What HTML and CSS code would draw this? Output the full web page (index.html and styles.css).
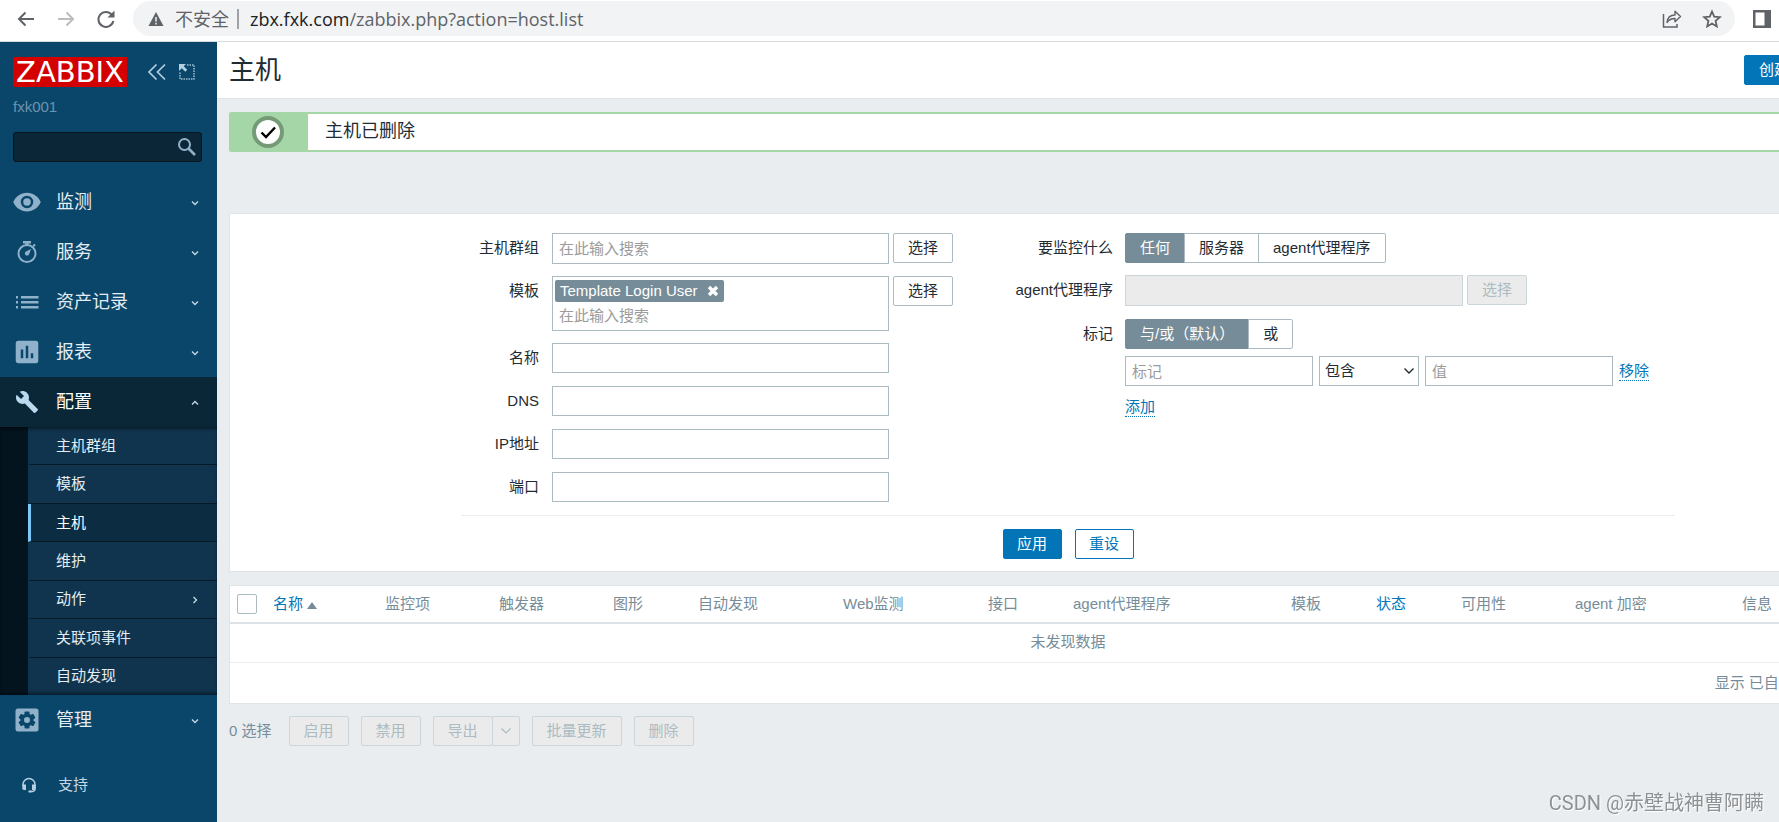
FILE: index.html
```html
<!DOCTYPE html>
<html lang="zh-CN">
<head>
<meta charset="utf-8">
<title>主机</title>
<link rel="stylesheet" href="styles.css">
</head>
<body>
<div class="browser">
  <button class="nav-btn" aria-label="后退"><svg width="20" height="20" viewBox="0 0 20 20"><path d="M18 10H3M9.500 3.500L3 10l6.500 6.500" fill="none" stroke="#5f6368" stroke-width="2"/></svg></button>
  <button class="nav-btn" aria-label="前进"><svg width="20" height="20" viewBox="0 0 20 20"><path d="M2 10h15M10.500 3.500L17 10l-6.500 6.500" fill="none" stroke="#babcbe" stroke-width="2"/></svg></button>
  <button class="nav-btn" aria-label="刷新"><svg width="20" height="20" viewBox="0 0 20 20"><path d="M16 6A7.500 7.500 0 1 0 17.300 12" fill="none" stroke="#5f6368" stroke-width="2"/><path d="M18.500 1.500v7h-7z" fill="#5f6368"/></svg></button>
  <div class="omnibox">
    <svg width="16" height="16" viewBox="0 0 16 16"><path d="M8 1l7.500 14H.5z" fill="#5f6368"/><path d="M8 6v4.500M8 11.800v1.700" stroke="#f1f3f4" stroke-width="1.500"/></svg>
    <span class="insecure">不安全</span>
    <span class="url"><b>zbx.fxk.com</b>/zabbix.php?action=host.list</span>
    <button class="omni-btn" aria-label="分享"><svg width="20" height="20" viewBox="0 0 20 20"><path d="M1.500 5v13H15v-3" fill="none" stroke="#5f6368" stroke-width="1.500"/><path d="M5 13.500C5.500 8.500 8.500 6 13 6V2.200l5.500 5.300L13 12.800V9.500c-3.500 0-6 1-8 4z" fill="none" stroke="#5f6368" stroke-width="1.400" stroke-linejoin="round"/></svg></button>
    <button class="omni-btn" aria-label="收藏"><svg width="20" height="20" viewBox="0 0 20 20"><path d="M10 2.500l2.200 5.200 5.600.5-4.200 3.700 1.200 5.500-4.800-2.900-4.800 2.900 1.200-5.500-4.200-3.700 5.600-.5z" fill="none" stroke="#5f6368" stroke-width="1.800"/></svg></button>
  </div>
  <button class="panel-btn" aria-label="侧边栏"><svg width="18" height="18" viewBox="0 0 18 18"><path d="M0 0h18v18H0zM2.500 2.500v13h9v-13z" fill="#5f6368" fill-rule="evenodd"/></svg></button>
</div>
<div class="app">
  <aside class="sidebar">
    <div class="brand">
      <a class="logo" href="#">ZABBIX</a>
      <button class="side-btn" aria-label="折叠"><svg width="20" height="18" viewBox="0 0 20 18"><path d="M9.500 1.500L2 9l7.500 7.500M18 1.500L10.500 9l7.500 7.500" fill="none" stroke="#b4cfe0" stroke-width="1.700"/></svg></button>
      <button class="side-btn" aria-label="隐藏"><svg width="18" height="18" viewBox="0 0 18 18"><path d="M9 2h7v14H2V9" fill="none" stroke="#9fbfd3" stroke-width="1.500" stroke-dasharray="1.500 1"/><path d="M1 1h7L5.700 3.300l3.500 3.500-1.900 1.900-3.500-3.500L1 8z" fill="#b4cfe0"/></svg></button>
    </div>
    <div class="server">fxk001</div>
    <div class="search">
      <input type="text" aria-label="搜索">
      <button class="search-btn" aria-label="搜索"><svg width="20" height="20" viewBox="0 0 20 20"><circle cx="7.500" cy="7.500" r="5.500" fill="none" stroke="#8fb2ca" stroke-width="2"/><path d="M11.500 11.500l6.500 6.500" stroke="#8fb2ca" stroke-width="2.600"/></svg></button>
    </div>
    <nav class="menu">
      <a class="item" href="#"><svg class="ico" viewBox="0 0 24 24"><path d="M12 4.500C7 4.500 2.730 7.610 1 12c1.730 4.390 6 7.500 11 7.500s9.270-3.110 11-7.500c-1.730-4.390-6-7.500-11-7.500zM12 17a5 5 0 1 1 0-10 5 5 0 0 1 0 10zm0-8a3 3 0 1 0 0 6 3 3 0 0 0 0-6z"/></svg><span>监测</span><svg class="chev" viewBox="0 0 8 8"><path d="M1 2.500l3 3 3-3"/></svg></a>
      <a class="item" href="#"><svg class="ico" viewBox="0 0 30 30"><path d="M11 4h8v2.500h-2.500V8h-3V6.500H11z"/><circle cx="15" cy="16.500" r="8.500" fill="none" stroke="#8fb2ca" stroke-width="2"/><path d="M20.500 8.500l1.800-1.800 1.500 1.500-1.800 1.800zM19 12l-2 5.500a2.200 2.200 0 1 1-3-3z"/></svg><span>服务</span><svg class="chev" viewBox="0 0 8 8"><path d="M1 2.500l3 3 3-3"/></svg></a>
      <a class="item" href="#"><svg class="ico" viewBox="0 0 30 30"><path d="M4 9h2v2.500H4zM9 9h17.500v2.500H9zM4 14h2v2.500H4zM9 14h17.500v2.500H9zM4 19h2v2.500H4zM9 19h17.500v2.500H9z"/></svg><span>资产记录</span><svg class="chev" viewBox="0 0 8 8"><path d="M1 2.500l3 3 3-3"/></svg></a>
      <a class="item" href="#"><svg class="ico" viewBox="0 0 24 24"><path d="M19 3H5a2 2 0 0 0-2 2v14c0 1.100.9 2 2 2h14a2 2 0 0 0 2-2V5a2 2 0 0 0-2-2zM9 17H7v-7h2zm4 0h-2V7h2zm4 0h-2v-4h2z"/></svg><span>报表</span><svg class="chev" viewBox="0 0 8 8"><path d="M1 2.500l3 3 3-3"/></svg></a>
      <a class="item open" href="#"><svg class="ico" viewBox="-3 -3 30 30"><path d="M22.700 19l-9.100-9.100c.9-2.300.4-5-1.500-6.900-2-2-5-2.400-7.400-1.300L9 6 6 9 1.600 4.700C.4 7.100.9 10.100 2.900 12.100c1.900 1.900 4.600 2.400 6.900 1.500l9.100 9.100c.4.4 1 .4 1.400 0l2.300-2.300c.5-.4.5-1.100.1-1.400z"/></svg><span>配置</span><svg class="chev" viewBox="0 0 8 8"><path d="M1 5.500l3-3 3 3"/></svg></a>
      <div class="submenu">
        <a href="#">主机群组</a>
        <a href="#">模板</a>
        <a class="current" href="#">主机</a>
        <a href="#">维护</a>
        <a href="#">动作<svg class="chev" viewBox="0 0 8 8"><path d="M2.500 1l3 3-3 3"/></svg></a>
        <a href="#">关联项事件</a>
        <a href="#">自动发现</a>
      </div>
      <a class="item" href="#"><svg class="ico" viewBox="0 0 30 30"><rect x="3.500" y="3.500" width="23" height="23" rx="2.500"/><g fill="#0a466a"><rect x="12.500" y="6.500" width="5" height="17" rx="1"/><rect x="12.500" y="6.500" width="5" height="17" rx="1" transform="rotate(60 15 15)"/><rect x="12.500" y="6.500" width="5" height="17" rx="1" transform="rotate(120 15 15)"/><circle cx="15" cy="15" r="6.500"/></g><circle cx="15" cy="15" r="3"/></svg><span>管理</span><svg class="chev" viewBox="0 0 8 8"><path d="M1 2.500l3 3 3-3"/></svg></a>
    </nav>
    <a class="support" href="#"><svg width="16" height="16" viewBox="0 0 16 16"><path d="M2 9V7.500a6 6 0 0 1 12 0V12c0 2-1.500 2.600-4.500 2.600" fill="none" stroke="#b4cfe0" stroke-width="1.500"/><path d="M1.300 7.500H5V13H3c-1.200 0-1.700-.8-1.700-2zM14.700 7.500H11V13h2.500c.8 0 1.200-.8 1.200-2zM7.500 13.500h3v2h-3z" fill="#b4cfe0"/></svg><span>支持</span></a>
  </aside>
  <div class="viewport">
    <div class="page">
      <header class="header"><h1>主机</h1><button class="btn primary">创建主机</button></header>
      <main class="content">
        <output class="message"><span class="mark"><svg width="32" height="32" viewBox="0 0 32 32"><circle cx="16" cy="16" r="14" fill="#fff" stroke="#749a77" stroke-width="4"/><path d="M9.500 16.500l4.500 4.500 9-9.500" fill="none" stroke="#000" stroke-width="2.400"/></svg></span><span class="message-text">主机已删除</span></output>
        <form class="filter">
          <div class="filter-cols">
            <div class="form left">
              <label for="groups">主机群组</label>
              <div class="field"><div class="multi"><input id="groups" type="text" placeholder="在此输入搜索"></div><button type="button" class="btn">选择</button></div>
              <label for="templates">模板</label>
              <div class="field"><div class="multi"><span class="tag">Template Login User<button type="button" class="tag-x" aria-label="移除模板"><svg width="12" height="12" viewBox="0 0 12 12"><path d="M2 2l8 8M10 2l-8 8" stroke="#fff" stroke-width="3.400"/></svg></button></span><input id="templates" type="text" placeholder="在此输入搜索"></div><button type="button" class="btn">选择</button></div>
              <label for="name">名称</label><div class="field"><input class="text" id="name" type="text"></div>
              <label for="dns">DNS</label><div class="field"><input class="text" id="dns" type="text"></div>
              <label for="ip">IP地址</label><div class="field"><input class="text" id="ip" type="text"></div>
              <label for="port">端口</label><div class="field"><input class="text" id="port" type="text"></div>
            </div>
            <div class="form right">
              <span class="label">要监控什么</span>
              <div class="field"><div class="segmented"><label><input type="radio" name="by" checked>任何</label><label><input type="radio" name="by">服务器</label><label><input type="radio" name="by">agent代理程序</label></div></div>
              <label for="proxy">agent代理程序</label>
              <div class="field"><div class="multi disabled"><input id="proxy" type="text" disabled></div><button type="button" class="btn" disabled>选择</button></div>
              <span class="label">标记</span>
              <div class="tags">
                <div class="segmented"><label><input type="radio" name="eval" checked>与/或（默认）</label><label><input type="radio" name="eval">或</label></div>
                <div class="tag-row"><input class="text" type="text" placeholder="标记" aria-label="标记"><span class="select"><select aria-label="运算符"><option>包含</option><option>等于</option></select><svg width="12" height="12" viewBox="0 0 12 12"><path d="M1.500 3.500L6 8l4.500-4.500" fill="none" stroke="#1f2c33" stroke-width="1.400"/></svg></span><input class="text" type="text" placeholder="值" aria-label="值"><a class="dotted" href="#">移除</a></div>
                <a class="dotted" href="#">添加</a>
              </div>
            </div>
          </div>
          <div class="filter-actions"><button type="button" class="btn primary">应用</button><button type="button" class="btn outline">重设</button></div>
        </form>
        <table class="hosts">
          <colgroup><col class="c-check"><col class="c-name"><col class="c-m"><col class="c-m"><col class="c-s"><col class="c-l"><col class="c-l"><col class="c-s"><col class="c-xl"><col class="c-s"><col class="c-s"><col class="c-m"><col class="c-enc"><col></colgroup>
          <thead><tr><th class="check"><input type="checkbox" aria-label="全选"></th><th><a href="#">名称<i class="sort"></i></a></th><th>监控项</th><th>触发器</th><th>图形</th><th>自动发现</th><th>Web监测</th><th>接口</th><th>agent代理程序</th><th>模板</th><th><a href="#">状态</a></th><th>可用性</th><th>agent 加密</th><th>信息</th></tr></thead>
          <tbody><tr><td class="empty" colspan="14">未发现数据</td></tr></tbody>
          <tfoot><tr><td class="count" colspan="14">显示 已自动发现的 0 中的 0</td></tr></tfoot>
        </table>
        <div class="actions">
          <span class="selected">0 选择</span>
          <button class="btn" disabled>启用</button>
          <button class="btn" disabled>禁用</button>
          <span class="split"><button class="btn" disabled>导出</button><button class="btn drop" disabled aria-label="导出格式"><svg width="12" height="12" viewBox="0 0 12 12"><path d="M1.500 3.500L6 8l4.500-4.500" fill="none" stroke="#acbbc2" stroke-width="1.200"/></svg></button></span>
          <button class="btn" disabled>批量更新</button>
          <button class="btn" disabled>删除</button>
        </div>
      </main>
    </div>
  </div>
</div>
<div class="watermark">CSDN @赤壁战神曹阿瞒</div>
</body>
</html>
```
FILE: styles.css
```css
* { box-sizing: border-box; }
body {
  margin: 0;
  min-height: 100vh;
  display: flex;
  flex-direction: column;
  background: #e9edf0;
  color: #1f2c33;
  font: 15px/20px "Liberation Sans", "Noto Sans CJK SC", sans-serif;
}
button, input, select { font: inherit; color: inherit; margin: 0; }
button { cursor: pointer; }
svg { display: block; flex: none; }
a { color: #0275b8; text-decoration: none; }

.browser {
  display: flex;
  align-items: center;
  height: 42px;
  padding: 0 8px 4px 16px;
  background: #fff;
  border-bottom: 1px solid #d9dbde;
}
.nav-btn, .omni-btn, .panel-btn, .side-btn, .search-btn, .tag-x {
  display: flex;
  padding: 0;
  border: 0;
  background: none;
}
.nav-btn { margin-right: 20px; }
.omnibox {
  flex: 1;
  display: flex;
  align-items: center;
  height: 35px;
  margin: 0 18px 0 -3px;
  padding: 0 13px 0 15px;
  border-radius: 18px;
  background: #f1f3f4;
  font: 18px/24px "Open Sans", "Noto Sans CJK SC", sans-serif;
  color: #5f6368;
}
.insecure { margin-left: 11px; padding-right: 8px; border-right: 2px solid #9fa3a7; line-height: 20px; }
.url { flex: 1; margin-left: 11px; }
.url b { font-weight: 400; color: #202124; }
.omni-btn { margin-left: 20px; }

.app { flex: 1; display: flex; }
.sidebar { flex: none; width: 217px; background: #0a466a; }
.brand { display: flex; align-items: center; padding: 15px 0 0 13px; }
.logo {
  width: 114px;
  margin-right: 20px;
  background: #d40000;
  color: #fff;
  font: 29px/30px "DejaVu Sans", sans-serif;
  text-align: center;
}
.side-btn { margin-right: 11px; }
.server { padding: 10px 13px 0; color: #6d94ad; }
.search {
  display: flex;
  align-items: center;
  height: 30px;
  margin: 15px 15px 15px 13px;
  padding-right: 4px;
  border: 1px solid #06141d;
  border-radius: 3px;
  background: #0b2637;
}
.search input { flex: 1; min-width: 0; border: 0; background: none; color: #fff; }
.item {
  display: flex;
  align-items: center;
  gap: 14px;
  height: 50px;
  padding: 0 18px 0 12px;
  color: #e3edf3;
  font-size: 18px;
}
.item span { flex: 1; }
.ico { width: 30px; height: 30px; fill: #8fb2ca; }
.chev { width: 8px; height: 8px; margin-top: 2px; fill: none; stroke: #c4d7e3; stroke-width: 1.400; }
.open { background: #0a2737; color: #fff; }
.open .ico { fill: #b9d9ee; }
.submenu {
  display: grid;
  min-height: 268px;
  padding-left: 28px;
  background: linear-gradient(90deg, #04141e 28px, #10344d 28px);
  box-shadow: inset 0 4px 5px -4px #000, inset 0 -4px 5px -4px #000;
}
.submenu a {
  display: flex;
  align-items: center;
  justify-content: space-between;
  padding: 8px 18px 8px 25px;
  border-left: 3px solid transparent;
  border-bottom: 1px solid #051a26;
  color: #e3edf3;
}
.submenu a:last-child { border-bottom: 0; }
.submenu .current { border-left-color: #7cc8f5; background: #0b2c41; color: #fff; }
.support { display: flex; align-items: center; gap: 21px; padding: 30px 21px 20px; color: #c4d7e3; }

.viewport { flex: 1; min-width: 0; overflow: hidden; }
.page { margin-right: -140px; }
.header {
  display: flex;
  align-items: center;
  justify-content: space-between;
  height: 57px;
  padding: 0 85px 0 12px;
  background: #fff;
  border-bottom: 1px solid #dfe4e7;
}
h1 { margin: 0; font-size: 26px; line-height: 30px; font-weight: 400; }
.content { padding: 13px 12px; }
.btn {
  height: 30px;
  padding: 0 14px;
  border: 1px solid #acbbc2;
  border-radius: 2px;
  background: #fff;
  line-height: 20px;
  white-space: nowrap;
}
.primary { background: #0275b8; border-color: #0275b8; color: #fff; }
.outline { border-color: #0275b8; color: #0275b8; }
.btn:disabled { background: #ebebeb; border-color: #ccd5d9; color: #acbbc2; cursor: default; }

.message {
  display: flex;
  height: 40px;
  border: 2px solid #a5d6a7;
  border-radius: 2px;
  background: #fff;
  font-size: 18px;
}
.mark { display: flex; align-items: center; justify-content: center; width: 77px; padding-right: 3px; background: #a5d6a7; }
.message-text { padding-left: 17px; line-height: 34px; }

.filter { margin-top: 61px; padding: 19px 0 12px; background: #fff; border: 1px solid #dfe4e7; }
.filter-cols {
  display: flex;
  width: 1214px;
  margin: 0 auto;
  padding-bottom: 12px;
  border-bottom: 1px solid #ebeef0;
}
.form { display: grid; row-gap: 12px; align-content: start; }
.left { grid-template-columns: 78px 401px; column-gap: 13px; }
.right { grid-template-columns: 110px 1fr; flex: 1; margin-left: 50px; column-gap: 12px; }
.form > label, .label { line-height: 30px; text-align: right; white-space: nowrap; }
.field { display: flex; align-items: flex-start; gap: 4px; }
.multi { width: 337px; min-height: 31px; padding: 2px; border: 1px solid #acbbc2; background: #fff; }
.multi input { display: block; width: 100%; height: 25px; padding: 0 4px; border: 0; background: none; }
.disabled { width: 338px; margin-bottom: 1px; background: #ebebeb; border-color: #ccd5d9; }
.tag {
  display: inline-flex;
  align-items: center;
  gap: 9px;
  height: 22px;
  margin-top: 1px;
  padding: 0 5px;
  border-radius: 2px;
  background: #768d99;
  color: #fff;
}
.tag + input { margin-top: 1px; }
.text { width: 337px; height: 30px; padding: 0 6px; border: 1px solid #acbbc2; background: #fff; }
.left .text { margin-bottom: 1px; }
::placeholder { color: #9b9b9b; opacity: 1; }
.segmented { display: flex; }
.segmented label {
  height: 30px;
  padding: 0 14px;
  border: 1px solid #acbbc2;
  margin-left: -1px;
  background: #fff;
  line-height: 28px;
  white-space: nowrap;
}
.segmented label:first-child { margin-left: 0; border-radius: 2px 0 0 2px; }
.segmented label:last-child { border-radius: 0 2px 2px 0; }
.segmented label:has(:checked) { background: #768d99; border-color: #768d99; color: #fff; }
.segmented input { position: absolute; opacity: 0; pointer-events: none; }
.tag-row { display: flex; align-items: center; gap: 6px; margin: 7px 0 11px; }
.tag-row .text { width: 188px; }
.select { position: relative; }
.select select {
  display: block;
  width: 100px;
  height: 30px;
  padding: 0 5px;
  border: 1px solid #acbbc2;
  background: #fff;
  appearance: none;
}
.select svg { position: absolute; right: 4px; top: 9px; pointer-events: none; }
.dotted { display: inline-block; border-bottom: 1px dotted #0275b8; line-height: 19px; }
.filter-actions { display: flex; justify-content: center; gap: 13px; padding-top: 13px; }
.filter-actions .btn { width: 59px; padding: 0; }

.hosts {
  width: 100%;
  margin-top: 13px;
  table-layout: fixed;
  border-collapse: separate;
  border-spacing: 0;
  border: 1px solid #dfe4e7;
  background: #fff;
  color: #768d99;
}
.hosts th, .hosts td { padding: 0 8px; font-weight: 400; text-align: left; white-space: nowrap; }
.hosts th { height: 38px; border-bottom: 2px solid #dce2e5; }
.hosts .check { padding: 0 7px; }
.hosts .empty { height: 39px; text-align: center; border-bottom: 1px solid #ebeef0; padding-bottom: 3px; }
.hosts .count { height: 40px; text-align: right; }
.check input {
  display: block;
  width: 20px;
  height: 20px;
  margin: 0;
  appearance: none;
  border: 1px solid #acbbc2;
  border-radius: 2px;
  background: #fff;
}
.sort {
  display: inline-block;
  margin-left: 4px;
  border: 5px solid transparent;
  border-top: 0;
  border-bottom: 7px solid #768d99;
}
.c-check { width: 35px; }
.c-name { width: 112px; }
.c-s { width: 85px; }
.c-m { width: 114px; }
.c-l { width: 145px; }
.c-xl { width: 218px; }
.c-enc { width: 167px; }
.actions { display: flex; align-items: center; gap: 12px; margin-top: 12px; color: #768d99; }
.selected { margin-right: 5px; }
.split { display: flex; }
.drop { padding: 0 7px; margin-left: -1px; }
.watermark {
  position: fixed;
  right: 15px;
  bottom: 6px;
  font: 20px/26px Roboto, "Noto Sans CJK SC", sans-serif;
  color: #8e9194;
  text-shadow: 1px 1px 0 #fff;
}
```
